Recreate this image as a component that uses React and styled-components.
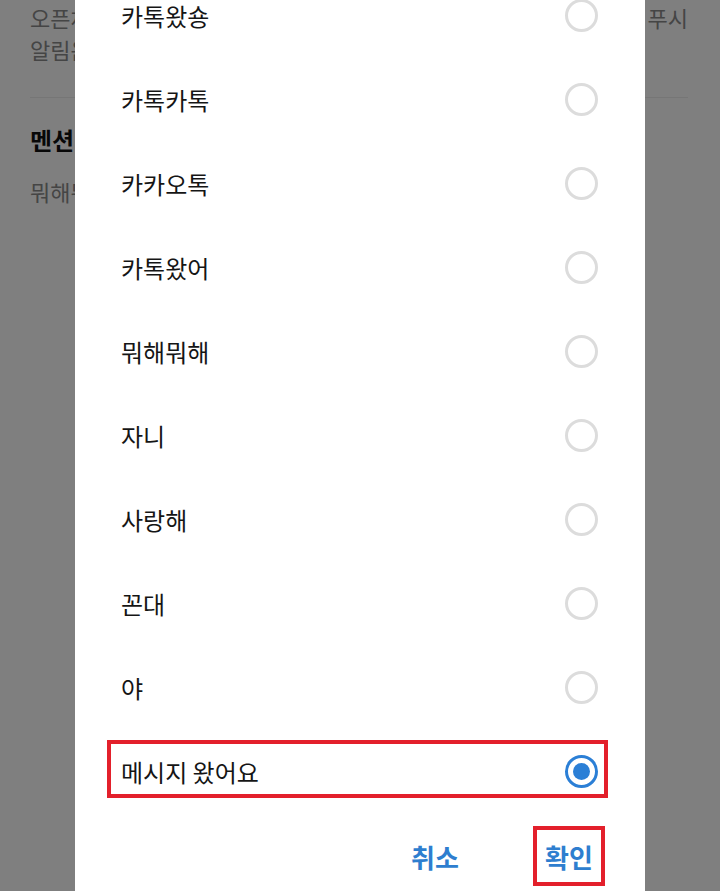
import React from "react";
import styled, { createGlobalStyle } from "styled-components";

const GlobalStyle = createGlobalStyle`
  body {
    margin: 0;
    font-family: "Noto Sans CJK KR", "Noto Sans", sans-serif;
    overflow: hidden;
  }
`;

const Screen = styled.div`
  position: relative;
  width: 720px;
  height: 891px;
  overflow: hidden;
  background: #fff;
`;

const Settings = styled.div`
  padding: 1px 32px 0 30px;
`;

const Section = styled.div`
  padding: ${(props) => (props.first ? "0 0 32px" : "27px 0 32px")};
  border-bottom: ${(props) => (props.first ? "1px solid #ececec" : "none")};
`;

const SectionTitle = styled.div`
  font-size: 24px;
  font-weight: 700;
  line-height: 30px;
  color: #111;
  margin-bottom: 20px;
`;

const DescLine = styled.div`
  font-size: 22px;
  line-height: 32px;
  color: #8a8a8a;
  text-align: left;
  text-align-last: ${(props) => (props.full ? "justify" : "auto")};
`;

const Dim = styled.div`
  position: absolute;
  inset: 0;
  background: rgba(0, 0, 0, 0.5);
`;

const Dialog = styled.div`
  position: absolute;
  top: -27px;
  left: 75px;
  width: 570px;
  background: #fff;
`;

const OptionList = styled.ul`
  list-style: none;
  margin: 0;
  padding: 0;
`;

const OptionRow = styled.li`
  position: relative;
  height: 84px;
  display: flex;
  align-items: center;
  justify-content: space-between;
  padding: 0 47px 0 46px;
  font-size: 24px;
  color: #151515;
`;

const Radio = styled.span`
  position: relative;
  width: 33px;
  height: 33px;
  box-sizing: border-box;
  border-radius: 50%;
  border: 3px solid ${(props) => (props.checked ? "#2b7fd6" : "#dcdcdc")};

  &::after {
    content: "";
    display: ${(props) => (props.checked ? "block" : "none")};
    position: absolute;
    top: 5px;
    left: 5px;
    width: 17px;
    height: 17px;
    border-radius: 50%;
    background: #2b7fd6;
  }
`;

const Highlight = styled.span`
  position: absolute;
  left: 32px;
  right: 37px;
  top: 11px;
  height: 58px;
  box-sizing: border-box;
  border: 4px solid #e3202b;
  pointer-events: none;
`;

const ButtonBar = styled.div`
  display: flex;
  justify-content: flex-end;
  gap: 62px;
  padding: 13px 40px 24px;
`;

const DialogButton = styled.button`
  width: 72px;
  height: 60px;
  padding: 0;
  box-sizing: border-box;
  border: 4px solid ${(props) => (props.marked ? "#e3202b" : "transparent")};
  background: none;
  font-family: inherit;
  font-size: 26px;
  font-weight: 700;
  color: #2e7ecf;
  text-align: center;
  cursor: pointer;
`;

const options = [
  "카톡왔숑",
  "카톡카톡",
  "카카오톡",
  "카톡왔어",
  "뭐해뭐해",
  "자니",
  "사랑해",
  "꼰대",
  "야",
  "메시지 왔어요",
];

const App = () => {
  const selected = "메시지 왔어요";

  return (
    <>
      <GlobalStyle />
      <Screen>
        <Settings>
          <Section first>
            <DescLine full>오픈채팅 메시지를 받을 때 울리는 푸시</DescLine>
            <DescLine>알림음을 설정할 수 있어요.</DescLine>
          </Section>
          <Section>
            <SectionTitle>멘션 알림음</SectionTitle>
            <DescLine>뭐해뭐해</DescLine>
          </Section>
        </Settings>
        <Dim />
        <Dialog>
          <OptionList>
            {options.map((name) => (
              <OptionRow key={name}>
                {name}
                <Radio checked={name === selected} />
                {name === selected && <Highlight />}
              </OptionRow>
            ))}
          </OptionList>
          <ButtonBar>
            <DialogButton>취소</DialogButton>
            <DialogButton marked>확인</DialogButton>
          </ButtonBar>
        </Dialog>
      </Screen>
    </>
  );
};

export default App;
